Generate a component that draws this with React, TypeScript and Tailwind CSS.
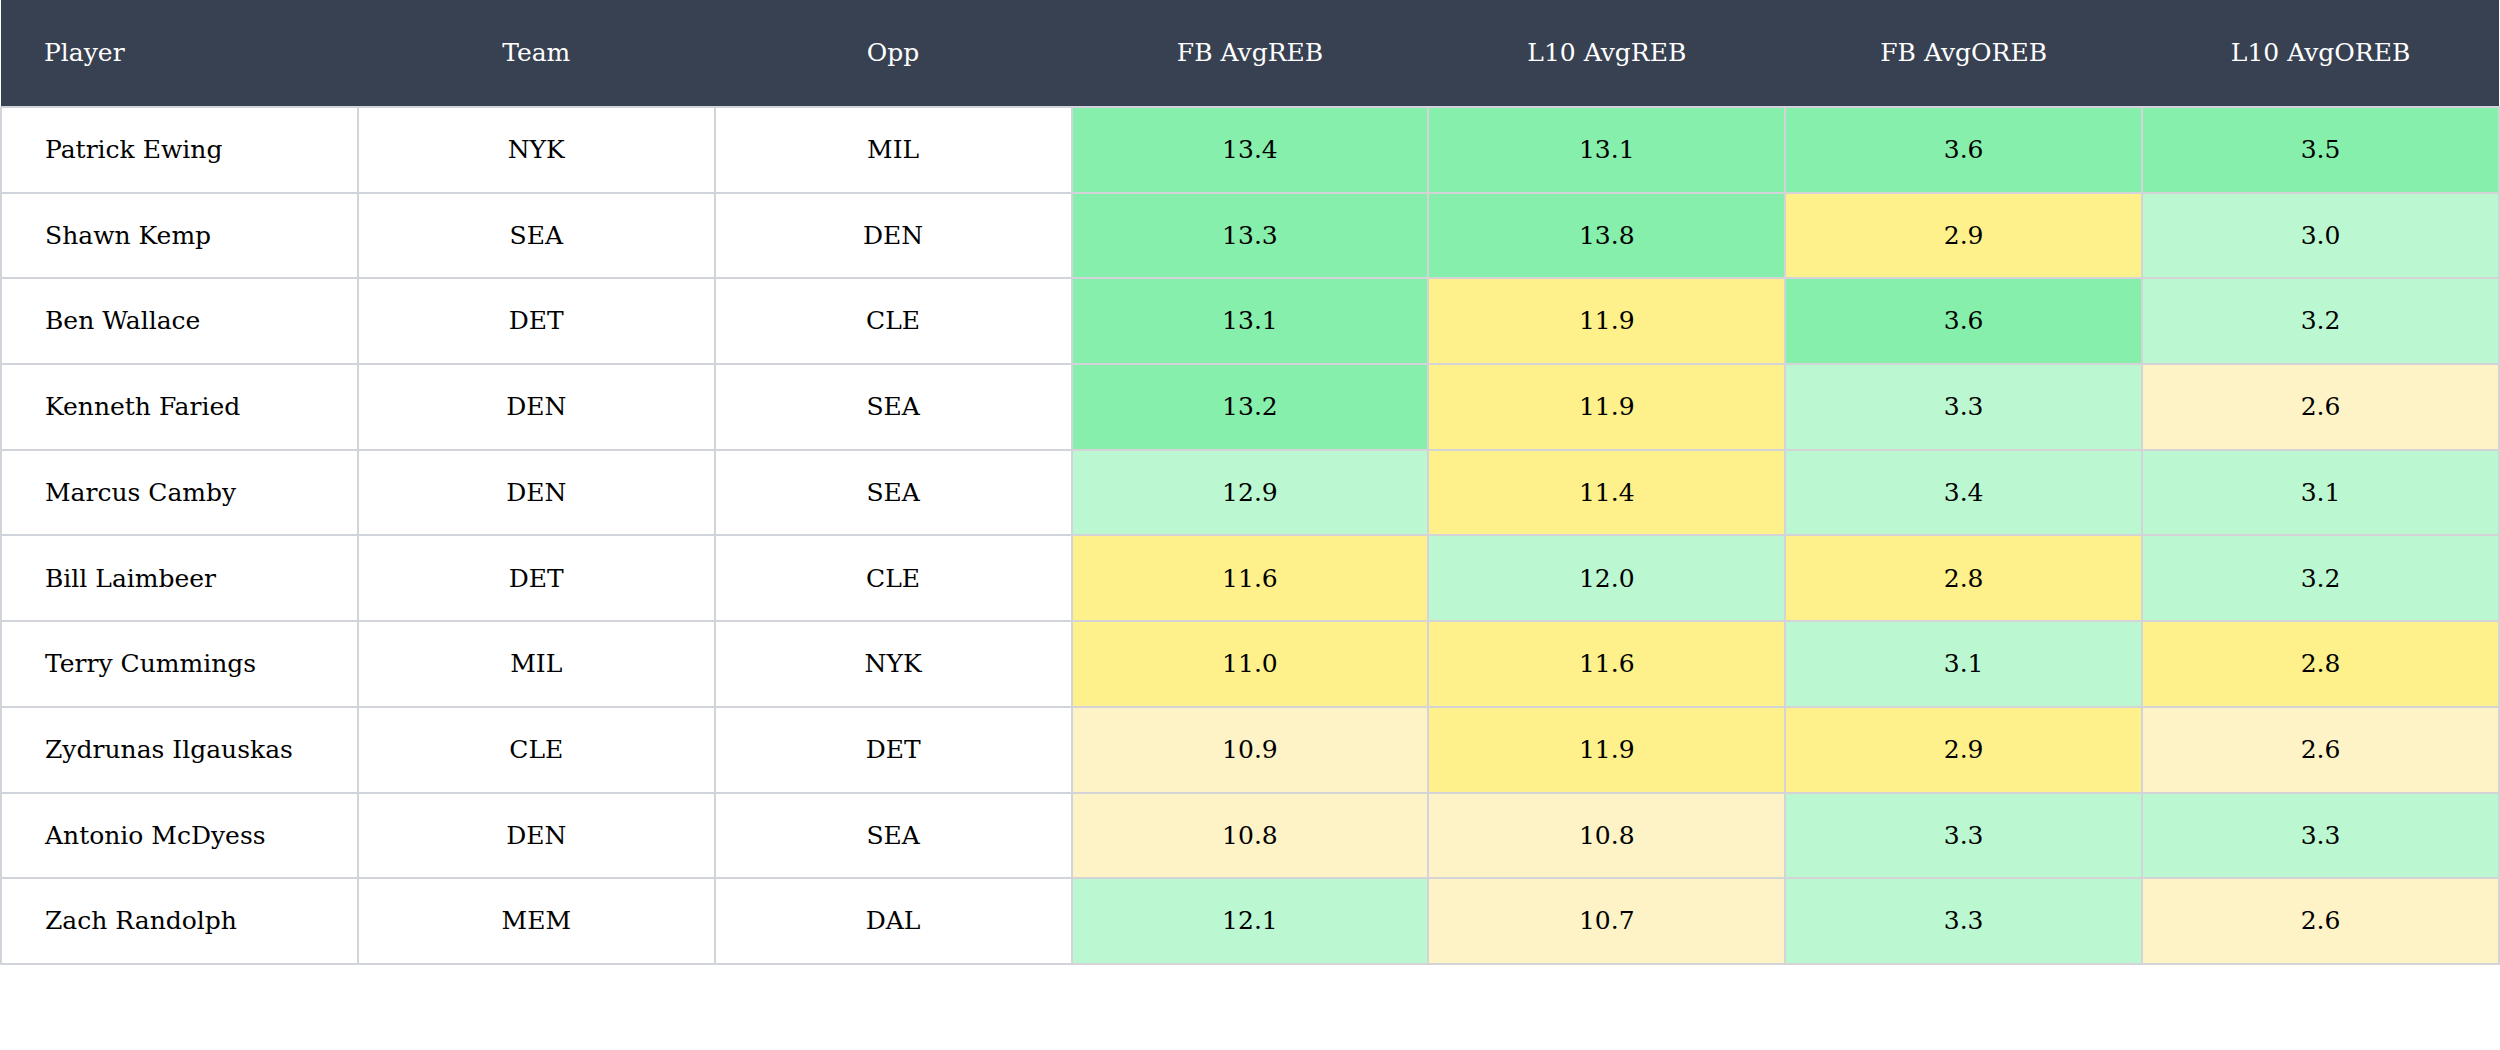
const GREEN = 'bg-[#86efac]';
const LIGHT_GREEN = 'bg-[#bbf7d0]';
const YELLOW = 'bg-[#fef08a]';
const LIGHT_YELLOW = 'bg-[#fef3c7]';

type Tone = 'g' | 'lg' | 'y' | 'ly';

const tones: Record<Tone, string> = {
    g: GREEN,
    lg: LIGHT_GREEN,
    y: YELLOW,
    ly: LIGHT_YELLOW,
};

interface Row {
    player: string;
    team: string;
    opp: string;
    stats: [string, Tone][];
}

const columns = ['Player', 'Team', 'Opp', 'FB AvgREB', 'L10 AvgREB', 'FB AvgOREB', 'L10 AvgOREB'];

const rows: Row[] = [
    { player: 'Patrick Ewing', team: 'NYK', opp: 'MIL', stats: [['13.4', 'g'], ['13.1', 'g'], ['3.6', 'g'], ['3.5', 'g']] },
    { player: 'Shawn Kemp', team: 'SEA', opp: 'DEN', stats: [['13.3', 'g'], ['13.8', 'g'], ['2.9', 'y'], ['3.0', 'lg']] },
    { player: 'Ben Wallace', team: 'DET', opp: 'CLE', stats: [['13.1', 'g'], ['11.9', 'y'], ['3.6', 'g'], ['3.2', 'lg']] },
    { player: 'Kenneth Faried', team: 'DEN', opp: 'SEA', stats: [['13.2', 'g'], ['11.9', 'y'], ['3.3', 'lg'], ['2.6', 'ly']] },
    { player: 'Marcus Camby', team: 'DEN', opp: 'SEA', stats: [['12.9', 'lg'], ['11.4', 'y'], ['3.4', 'lg'], ['3.1', 'lg']] },
    { player: 'Bill Laimbeer', team: 'DET', opp: 'CLE', stats: [['11.6', 'y'], ['12.0', 'lg'], ['2.8', 'y'], ['3.2', 'lg']] },
    { player: 'Terry Cummings', team: 'MIL', opp: 'NYK', stats: [['11.0', 'y'], ['11.6', 'y'], ['3.1', 'lg'], ['2.8', 'y']] },
    { player: 'Zydrunas Ilgauskas', team: 'CLE', opp: 'DET', stats: [['10.9', 'ly'], ['11.9', 'y'], ['2.9', 'y'], ['2.6', 'ly']] },
    { player: 'Antonio McDyess', team: 'DEN', opp: 'SEA', stats: [['10.8', 'ly'], ['10.8', 'ly'], ['3.3', 'lg'], ['3.3', 'lg']] },
    { player: 'Zach Randolph', team: 'MEM', opp: 'DAL', stats: [['12.1', 'lg'], ['10.7', 'ly'], ['3.3', 'lg'], ['2.6', 'ly']] },
];

export default function App() {
    return (
        <div className="min-h-[1050px] w-[2500px] bg-white font-['DejaVu_Serif',serif] text-[25px] text-black">
            <table className="w-full table-fixed border-collapse">
                <thead>
                    <tr className="bg-[#374151] text-white">
                        {columns.map((col, i) => (
                            <th
                                key={col}
                                className={`h-[107px] border-b-2 border-[#d1d5db] px-[43px] font-normal ${i === 0 ? 'text-left' : 'text-center'}`}
                            >
                                {col}
                            </th>
                        ))}
                    </tr>
                </thead>
                <tbody>
                    {rows.map((row) => (
                        <tr key={row.player}>
                            <td className="h-[85.7px] border-2 border-[#d1d5db] px-[43px] text-left">{row.player}</td>
                            <td className="h-[85.7px] border-2 border-[#d1d5db] text-center">{row.team}</td>
                            <td className="h-[85.7px] border-2 border-[#d1d5db] text-center">{row.opp}</td>
                            {row.stats.map(([value, tone], i) => (
                                <td key={i} className={`h-[85.7px] border-2 border-[#d4d4d8] text-center ${tones[tone]}`}>
                                    {value}
                                </td>
                            ))}
                        </tr>
                    ))}
                </tbody>
            </table>
        </div>
    );
}
